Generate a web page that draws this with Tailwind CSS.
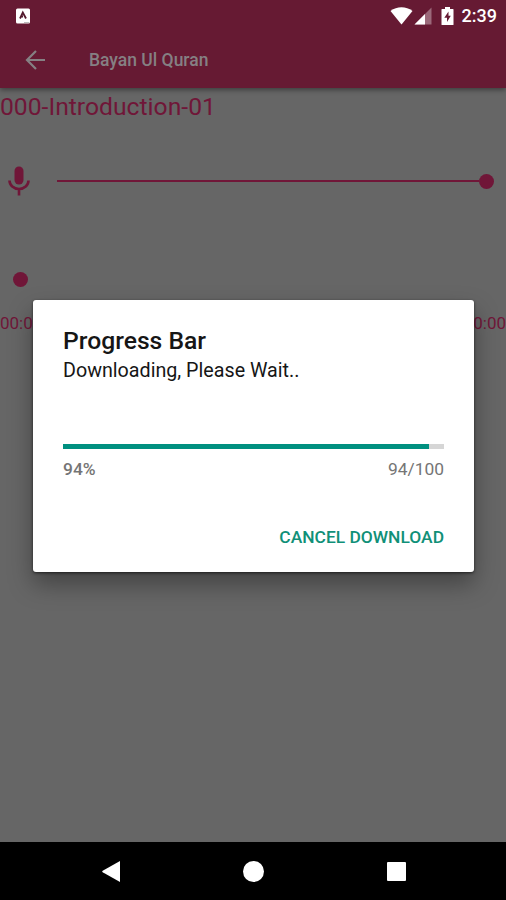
<!DOCTYPE html>
<html lang="en">
<head>
  <meta charset="utf-8">
  <title>Bayan Ul Quran</title>
  <script src="https://cdn.jsdelivr.net/npm/@tailwindcss/browser@4"></script>
</head>
<body class="relative flex flex-col w-[506px] h-[900px] overflow-hidden bg-[#666666] font-['Roboto',sans-serif]">
  <header class="relative z-10 h-[88px] shrink-0 bg-[#661a33] shadow-[0_2px_5px_rgba(0,0,0,0.4)]">
    <!-- status bar -->
    <div class="flex h-[31px] items-center justify-between pl-4 pr-[9px]">
      <svg class="w-[14px] h-[16px]" viewBox="0 0 14 16">
        <rect y="0.5" width="14" height="15" rx="1.5" fill="#fff"/>
        <path d="M4 10.5 6.8 4.5 10 10.5M5.2 8.5H7" fill="none" stroke="#541a2e" stroke-width="1.8"/>
        <path d="M8 14.5h5" stroke="#bbb" stroke-width="1"/>
      </svg>
      <div class="flex items-center text-white">
        <svg class="w-[23px] h-[18px]" viewBox="0 0 23 18" fill="#fff"><path d="M11.5 17.5 0.5 4Q5.5 0.3 11.5 0.3T22.5 4Z"/></svg>
        <svg class="ml-[1px] w-[18px] h-[18px]" viewBox="0 0 18 18">
          <path d="M0.5 17.5 17.5 0.5V17.5Z" fill="#fff" fill-opacity="0.35"/>
          <path d="M0.5 17.5 11 7V17.5Z" fill="#fff"/>
        </svg>
        <svg class="ml-[9px] w-[13px] h-[20px]" viewBox="0 0 13 20">
          <path d="M4 1h5v2h3q0.5 0 0.5 0.5v15q0 0.5-0.5 0.5H1q-0.5 0-0.5-0.5v-15Q0.5 3 1 3h3Z" fill="#fff"/>
          <path d="M7.5 5.5 3.3 11.7H6V16L9.8 9.8H7.5Z" fill="#661a33"/>
        </svg>
        <span class="ml-2 text-[18px] leading-[31px] font-medium">2:39</span>
      </div>
    </div>
    <!-- toolbar -->
    <div class="flex h-[57px] items-center pl-[25px] pt-px">
      <svg class="w-5 h-5" viewBox="0 0 20 20" fill="none" stroke="#858083" stroke-width="2.2"><path d="M20 10H2M11 1 2 10l9 9"/></svg>
      <h1 class="ml-11 pt-px text-[17.5px] font-medium text-[#858083]">Bayan Ul Quran</h1>
    </div>
  </header>

  <main class="flex-1 text-[#701638]">
    <p class="h-[38px] text-[24.7px] leading-[38px]">000-Introduction-01</p>
    <div class="mt-[39px] flex h-8 items-center pl-2 pr-3">
      <svg class="w-[22px] h-[30px]" viewBox="0 0 22 30">
        <rect x="6.5" y="0.5" width="9" height="18" rx="4.5" fill="currentColor"/>
        <path d="M1.5 14.5a9.5 8.5 0 0 0 19 0M11 23v6.5" fill="none" stroke="currentColor" stroke-width="2.6"/>
      </svg>
      <div class="ml-[27px] h-[2px] flex-1 bg-[#701638]"></div>
      <div class="size-[15px] rounded-full bg-[#701638]"></div>
    </div>
    <div class="mt-[75px] ml-[13px] size-[15px] rounded-full bg-[#701638]"></div>
    <div class="mt-6 flex justify-between text-[17px] leading-6">
      <span>00:00</span>
      <span>00:00</span>
    </div>
  </main>

  <nav class="h-[58px] shrink-0 bg-black flex items-center justify-between pl-[102px] pr-[100px]">
    <svg class="w-[18px] h-[21px]" viewBox="0 0 18 21" fill="#fff"><path d="M18 0V21L0.7 11.3q-1-0.8 0-1.6Z"/></svg>
    <div class="size-[21px] rounded-full bg-white"></div>
    <div class="size-[19px] rounded-[1px] bg-white"></div>
  </nav>

  <!-- download dialog -->
  <div class="absolute z-20 left-[33px] top-[300px] w-[441px] h-[272px] rounded-[3px] bg-white px-[30px] pt-[25px] shadow-[0_1px_3px_rgba(0,0,0,0.6),0_12px_24px_rgba(0,0,0,0.35)]">
    <h2 class="text-[24.7px] leading-8 font-medium text-[#161616]">Progress Bar</h2>
    <p class="text-[19.7px] leading-[27px] text-[#161616]">Downloading, Please Wait..</p>
    <div class="mt-[60px] h-[5px] bg-[#d6d6d6]">
      <div class="h-full bg-[#009080]" style="width: 96%"></div>
    </div>
    <div class="mt-2 flex justify-between text-[17.4px] leading-6 text-[#757575]">
      <span class="font-medium">94%</span>
      <span>94/100</span>
    </div>
    <div class="mt-11 text-right">
      <button class="text-[17.4px] leading-6 font-medium text-[#109078]">CANCEL DOWNLOAD</button>
    </div>
  </div>
</body>
</html>
